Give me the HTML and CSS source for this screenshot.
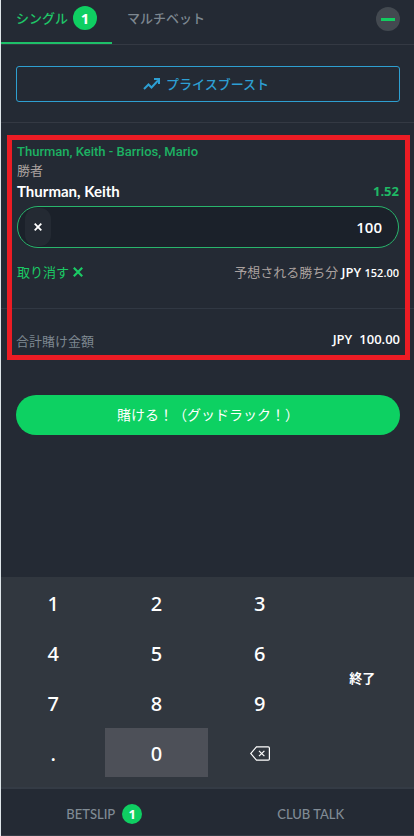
FILE: index.html
```html
<!DOCTYPE html>
<html lang="ja">
<head>
<meta charset="utf-8">
<meta name="viewport" content="width=device-width, initial-scale=1">
<title>Betslip</title>
<link rel="stylesheet" href="styles.css">
</head>
<body>
<header class="tabs">
  <button class="tab tab-active" type="button">シングル <span class="badge">1</span></button>
  <button class="tab" type="button">マルチベット</button>
  <button class="minimise" type="button" aria-label="Minimise"><svg width="14" height="3" viewBox="0 0 14 3"><path d="M0 0h14v3H0z" fill="#13cc60"/></svg></button>
</header>
<main>
  <div class="boost-area">
    <button class="boost" type="button">
      <svg width="17" height="12" viewBox="0 0 17 12" fill="none" stroke="currentColor" stroke-width="2"><path d="M1 11l4.500-4.500 3 3L15 2.500"/><path d="M11 1h5v5"/></svg>
      プライスブースト
    </button>
  </div>
  <section class="slip">
    <div class="bet">
      <a class="match" href="#">Thurman, Keith - Barrios, Mario</a>
      <p class="market">勝者</p>
      <div class="row pick"><span>Thurman, Keith</span><span class="odds">1.52</span></div>
      <div class="stake">
        <button class="clear" type="button" aria-label="Clear stake"><svg width="8" height="8" viewBox="0 0 8 8" stroke="#fff" stroke-width="1.800"><path d="M.7.7l6.600 6.600M7.300.7L.7 7.300"/></svg></button>
        <input class="amount" type="text" inputmode="decimal" value="100" aria-label="Stake">
      </div>
      <div class="row result">
        <button class="cancel" type="button">取り消す <svg width="10" height="10" viewBox="0 0 10 10" stroke="currentColor" stroke-width="2.200"><path d="M.8.8l8.400 8.400M9.200.8L.8 9.200"/></svg></button>
        <span class="win">予想される勝ち分 <b>JPY <small>152.00</small></b></span>
      </div>
    </div>
    <div class="row total"><span>合計賭け金額</span><span class="sum"><span>JPY</span><span>100.00</span></span></div>
  </section>
  <div class="place-area"><button class="place" type="button">賭ける！（グッドラック！）</button></div>
</main>
<div class="keypad">
  <button class="key" type="button">1</button>
  <button class="key" type="button">2</button>
  <button class="key" type="button">3</button>
  <button class="done" type="button">終了</button>
  <button class="key" type="button">4</button>
  <button class="key" type="button">5</button>
  <button class="key" type="button">6</button>
  <button class="key" type="button">7</button>
  <button class="key" type="button">8</button>
  <button class="key" type="button">9</button>
  <button class="key" type="button">.</button>
  <button class="key key-pressed" type="button">0</button>
  <button class="key" type="button" aria-label="Backspace"><svg width="20" height="15" viewBox="0 0 20 15" fill="none" stroke="#fff"><path d="M6.500.8h11.700q1.200 0 1.200 1.200v11q0 1.200-1.200 1.200H6.500L.7 7.500z" stroke-width="1.200"/><path d="M9 4.800l5.400 5.400M14.400 4.800L9 10.200" stroke-width="1.200"/></svg></button>
</div>
<nav class="bottom">
  <a href="#">BETSLIP <span class="badge badge-small">1</span></a>
  <a href="#">CLUB TALK</a>
</nav>
</body>
</html>
```
FILE: styles.css
```css
* { box-sizing: border-box; }

body {
  margin: 0;
  min-height: 100vh;
  display: flex;
  flex-direction: column;
  border-left: 1px solid #dfe6ea;
  background: #242a34;
  color: #fff;
  font: 13px/18px Lato, "Noto Sans CJK JP", sans-serif;
}

button, input {
  margin: 0;
  padding: 0;
  border: 0;
  background: none;
  color: inherit;
  font: inherit;
}

a { color: inherit; text-decoration: none; }
p { margin: 0; }
svg { display: block; flex: none; }

.tabs {
  display: flex;
  height: 45px;
  border-bottom: 1px solid #343943;
}

.tab {
  display: flex;
  align-items: center;
  gap: 5px;
  height: 44px;
  padding: 0 15px 8px;
  color: #7d8790;
  font-weight: 500;
}

.tab-active {
  padding-bottom: 6px;
  border-bottom: 2px solid #1ec069;
  color: #1fc568;
}

.badge {
  display: grid;
  place-items: center;
  width: 24px;
  height: 24px;
  border-radius: 50%;
  background: #0fcf62;
  color: #fff;
  font: bold 15px/20px "Noto Sans", sans-serif;
}

.badge-small { width: 20px; height: 20px; font-size: 13px; }

.minimise {
  display: grid;
  place-items: center;
  width: 24px;
  height: 24px;
  margin: 7px 14px 0 auto;
  border-radius: 50%;
  background: #434950;
}

.boost-area {
  padding: 21px 14px 20px 15px;
  border-bottom: 1px solid #343943;
}

.boost {
  display: flex;
  align-items: center;
  justify-content: center;
  gap: 6px;
  width: 100%;
  height: 36px;
  padding-right: 4px;
  border: 1px solid #2e9fd0;
  border-radius: 3px;
  color: #2d9fd3;
  font-weight: 500;
}

.slip { position: relative; }

.slip::after {
  content: "";
  position: absolute;
  inset: 12px 4px 4px 6px;
  border: 5px solid #ec1c24;
  pointer-events: none;
}

.bet {
  padding: 20px 15px 26px 16px;
  border-bottom: 1px solid #313843;
}

.row {
  display: flex;
  align-items: center;
  justify-content: space-between;
}

.match {
  display: block;
  color: #1db263;
  font: 500 13px/18px Roboto, sans-serif;
}

.market { color: #aaa19f; }

.pick { height: 24px; font: bold 15px/18px Lato, sans-serif; }
.odds { color: #1fb965; font: bold 13px/18px "Open Sans", sans-serif; }

.stake {
  display: flex;
  align-items: center;
  height: 42px;
  margin-top: 3px;
  padding: 0 16px 0 7px;
  border: 1px solid #29b56c;
  border-radius: 21px;
  background: #1b212a;
}

.clear {
  display: grid;
  place-items: center;
  width: 26px;
  height: 38px;
  border-radius: 11px;
  background: #242a33;
}

.amount {
  flex: 1;
  min-width: 0;
  height: 38px;
  outline: 0;
  font: 600 15px/20px "Open Sans", sans-serif;
  text-align: right;
}

.result { margin-top: 14px; height: 20px; }
.cancel { display: flex; align-items: center; gap: 4px; color: #1bca65; }
.win { color: #aaa19f; }
.win b { color: #fff; font-family: "Open Sans", sans-serif; font-weight: 600; }
.win small { font-size: 11px; }

.total { height: 55px; padding: 8px 14px 0 15px; color: #7d8790; }

.sum {
  display: flex;
  gap: 7px;
  padding-bottom: 4px;
  color: #fff;
  font: 600 13px/18px "Open Sans", sans-serif;
}

.place-area { padding: 31px 14px 20px 15px; }

.place {
  width: 100%;
  height: 40px;
  border-radius: 20px;
  background: #0dd162;
  font-size: 14px;
}

.keypad {
  display: grid;
  grid-template-columns: repeat(4, 1fr);
  grid-auto-rows: 50px;
  margin-top: auto;
  padding: 1px 0 9px;
  background: #31373f;
}

.key {
  display: grid;
  place-items: center;
  margin: 0 0 1px 1px;
  padding-top: 2px;
  font: 500 20px/24px "Noto Sans", sans-serif;
}

.key-pressed { background: #4d5058; }
.done { grid-column: 4; grid-row: 1 / 5; font-weight: bold; }

.bottom {
  display: grid;
  grid-template-columns: 1fr 1fr;
  height: 49px;
  border-top: 2px solid #343b45;
  border-bottom: 1px solid #343b45;
  color: #808b95;
}

.bottom a {
  display: flex;
  align-items: center;
  justify-content: center;
  gap: 7px;
  padding-top: 4px;
  font-weight: 500;
}
```
